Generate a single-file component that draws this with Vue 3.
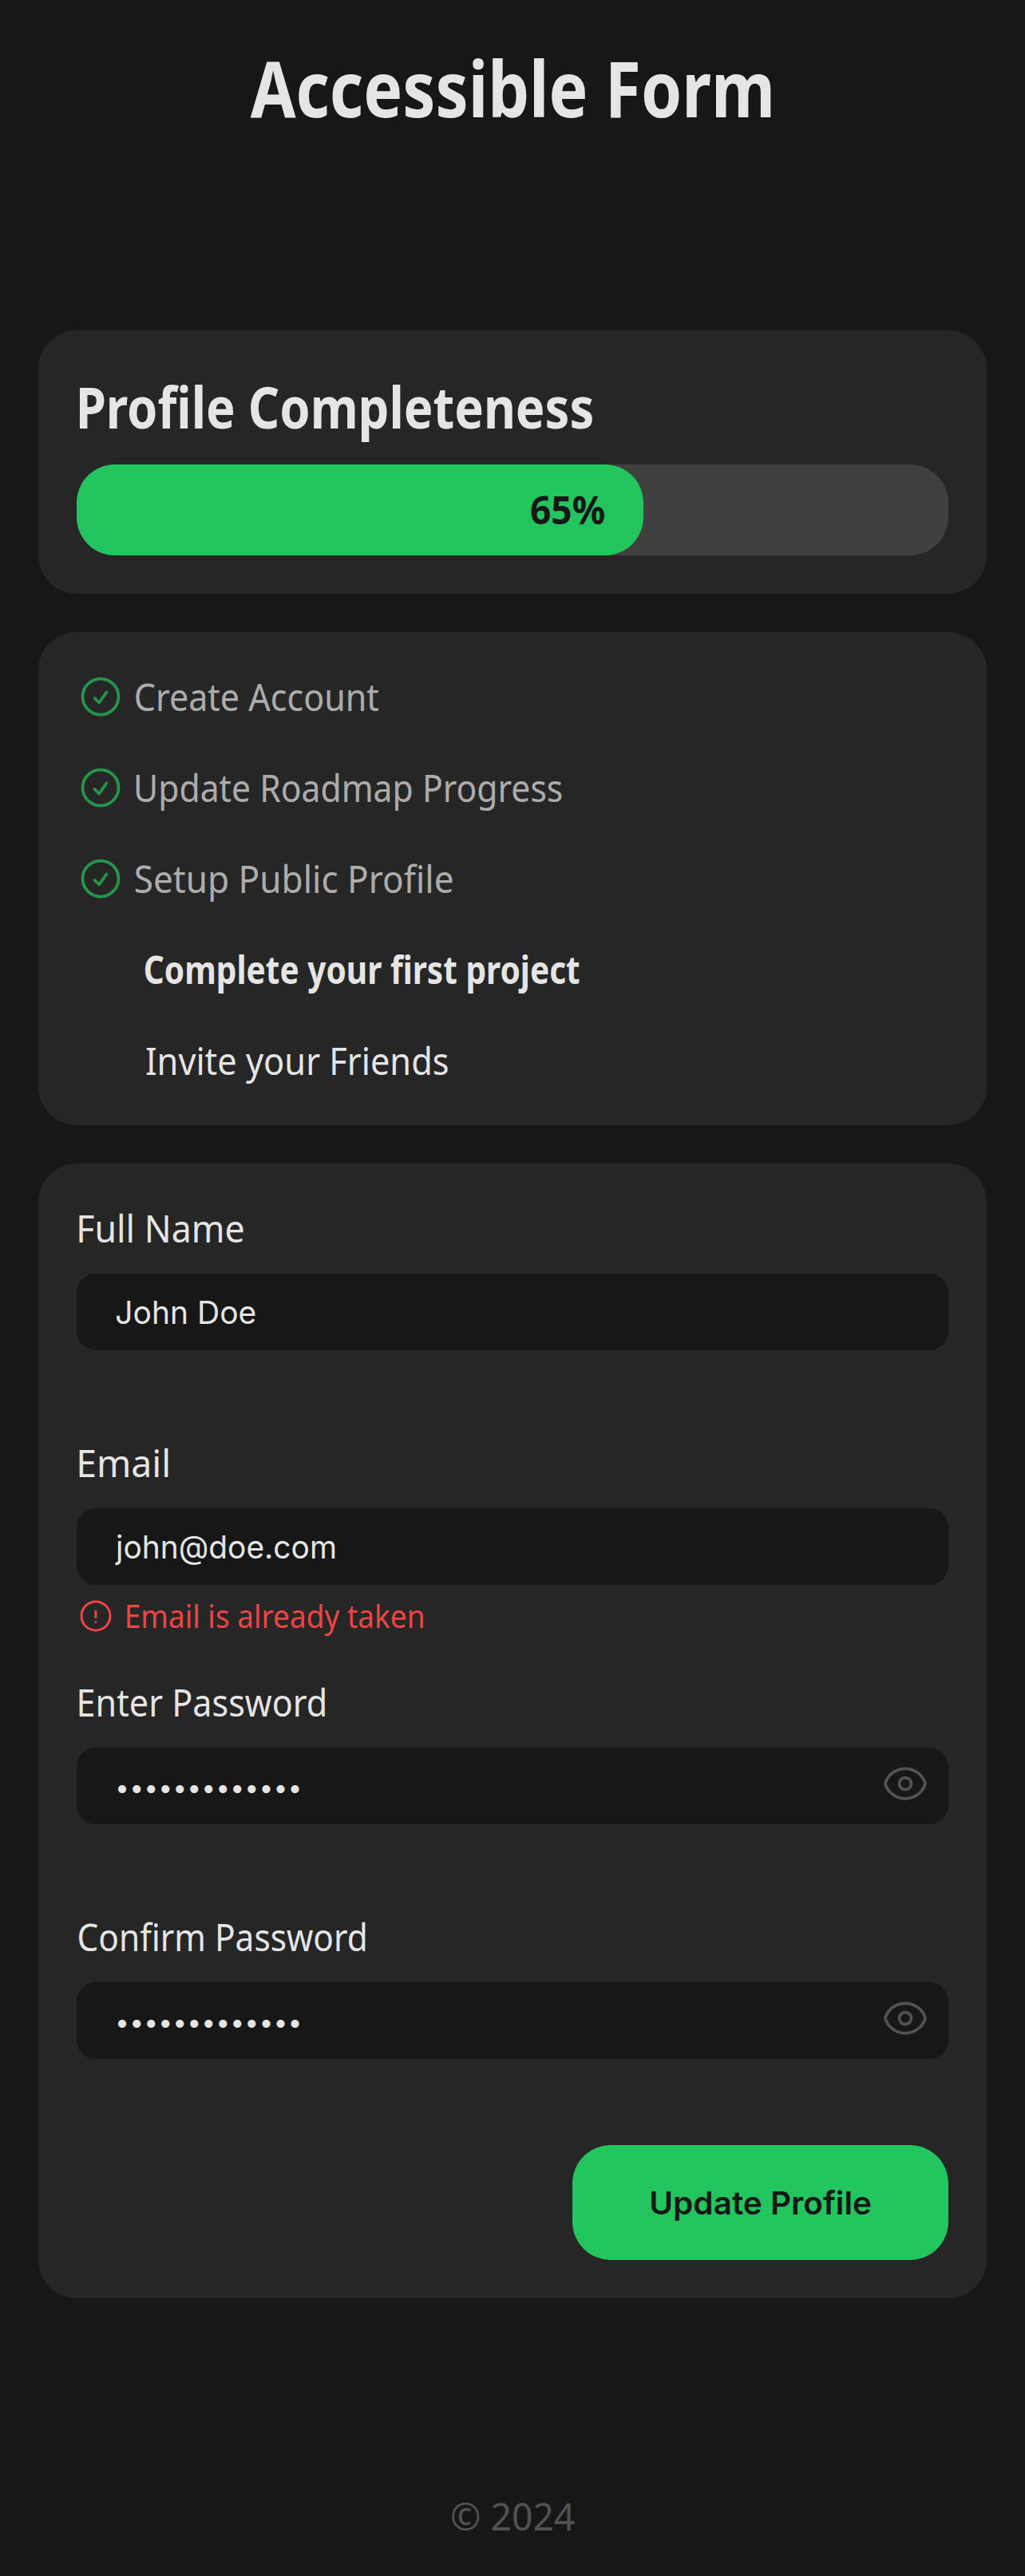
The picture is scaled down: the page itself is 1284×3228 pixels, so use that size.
<script setup>
const steps = [
  { text: 'Create Account', state: 'done', fit: { left: 1.6, width: 305 } },
  { text: 'Update Roadmap Progress', state: 'done', fit: { left: 2.5, width: 533 } },
  { text: 'Setup Public Profile', state: 'done', fit: { left: 1.6, width: 397 } },
  { text: 'Complete your first project', state: 'current', fit: { left: 1.5, width: 544.5 } },
  { text: 'Invite your Friends', state: 'todo', fit: { left: 2.8, width: 378 } },
]

const fields = [
  {
    label: 'Full Name',
    labelFit: { left: 2.9, width: 206 },
    value: 'John Doe',
    valueFit: { left: 1.3, width: 174.7 },
  },
  {
    label: 'Email',
    labelFit: { left: 3, width: 112 },
    value: 'john@doe.com',
    valueFit: { left: 0, width: 275 },
    error: 'Email is already taken',
    errorFit: { left: 2.5, width: 371.5 },
  },
  {
    label: 'Enter Password',
    labelFit: { left: 3.2, width: 308 },
    value: '•••••••••••••',
    secret: true,
  },
  {
    label: 'Confirm Password',
    labelFit: { left: 2.2, width: 359.5 },
    value: '•••••••••••••',
    secret: true,
  },
]

const progress = 65

function measure(el, text) {
  const style = getComputedStyle(el)
  const ctx = document.createElement('canvas').getContext('2d')
  ctx.font = `${style.fontWeight} ${style.fontSize} ${style.fontFamily}`
  return ctx.measureText(text)
}

// Condenses a line of text to a given drawn width, optionally aligning its first glyph's edge.
const vFit = {
  mounted(el, { value }) {
    const m = measure(el, el.textContent.trim())
    const scale = value.width / (m.actualBoundingBoxLeft + m.actualBoundingBoxRight)
    if (value.left === undefined) {
      el.style.transform = `scaleX(${scale})`
      return
    }
    const shift = value.left + m.actualBoundingBoxLeft * scale
    el.style.transformOrigin = 'left center'
    el.style.transform = `translateX(${shift}px) scaleX(${scale})`
  },
}

// Sizes and spaces the password bullets: dot diameter, distance between dots, first dot's edge and centre line.
const vDots = {
  mounted(el, { value }) {
    const base = measure(el, '•')
    const baseSize = parseFloat(getComputedStyle(el).fontSize)
    const size = (baseSize * value.diameter) / (base.actualBoundingBoxLeft + base.actualBoundingBoxRight)
    el.style.fontSize = `${size}px`
    const m = measure(el, '•')
    el.style.letterSpacing = `${value.pitch - m.width}px`
    const baseline = 48.5 + (m.fontBoundingBoxAscent - m.fontBoundingBoxDescent) / 2
    const centre = baseline - (m.actualBoundingBoxAscent - m.actualBoundingBoxDescent) / 2
    el.style.transform = `translate(${value.left + m.actualBoundingBoxLeft}px, ${value.centre - centre}px)`
  },
}
const dots = { diameter: 10.4, pitch: 18.03, left: 4.1, centre: 52 }
</script>

<template>
  <div class="page">
    <header class="header">
      <h1><span v-fit="{ width: 651.6 }" class="fit">Accessible Form</span></h1>
    </header>

    <main class="main">
      <section class="card">
        <h2><span v-fit="{ left: 3.8, width: 642.7 }" class="fit">Profile Completeness</span></h2>
        <div class="track">
          <div class="bar" :style="{ width: progress + '%' }">
            <span v-fit="{ width: 92 }" class="fit percent">{{ progress }}%</span>
          </div>
        </div>
      </section>

      <section class="card">
        <ul class="steps">
          <li v-for="step in steps" :key="step.text" class="step" :class="step.state">
            <svg v-if="step.state === 'done'" class="icon" viewBox="0 0 24 24">
              <path d="M9 12.75 11.25 15 15 9.75M21 12a9 9 0 1 1-18 0 9 9 0 0 1 18 0z" />
            </svg>
            <span v-fit="step.fit" class="fit">{{ step.text }}</span>
          </li>
        </ul>
      </section>

      <form class="card form" @submit.prevent>
        <div v-for="field in fields" :key="field.label" class="field">
          <div class="label"><span v-fit="field.labelFit" class="fit">{{ field.label }}</span></div>
          <div class="input">
            <span v-if="field.secret" v-dots="dots" class="fit">{{ field.value }}</span>
            <span v-else v-fit="field.valueFit" class="fit">{{ field.value }}</span>
            <svg v-if="field.secret" class="icon eye" viewBox="0 0 24 24">
              <path d="M2.036 12.322a1.012 1.012 0 0 1 0-.639C3.423 7.51 7.36 4.5 12 4.5c4.638 0 8.573 3.007 9.963 7.178.07.207.07.431 0 .639C20.577 16.49 16.64 19.5 12 19.5c-4.638 0-8.573-3.007-9.963-7.178z" />
              <path d="M15 12a3 3 0 1 1-6 0 3 3 0 0 1 6 0z" />
            </svg>
          </div>
          <div class="message">
            <div v-if="field.error" class="error">
              <svg class="icon small" viewBox="0 0 24 24">
                <path d="M12 9v3.75m-9-.75a9 9 0 1 1 18 0 9 9 0 0 1-18 0zm9 3.75h.008v.008H12v-.008z" />
              </svg>
              <span v-fit="field.errorFit" class="fit">{{ field.error }}</span>
            </div>
          </div>
        </div>
        <button class="submit" type="submit">
          <span v-fit="{ width: 275 }" class="fit">Update Profile</span>
        </button>
      </form>
    </main>

    <footer class="footer"><span v-fit="{ width: 154 }" class="fit">© 2024</span></footer>
  </div>
</template>

<style>
body {
  margin: 0;
  background: #171717;
}
</style>

<style scoped>
.page {
  box-sizing: border-box;
  min-height: 3228px;
  padding: 48px 48px 0;
  background: #171717;
  color: #e5e5e5;
  font-family: 'Noto Sans', 'Open Sans', sans-serif;
  font-size: 48px;
  line-height: 66px;
}
.fit {
  display: inline-block;
  white-space: nowrap;
}
.header {
  height: 366px;
  text-align: center;
}
h1 {
  margin: 0;
  font-size: 96px;
  line-height: 124px;
}
.main {
  display: flex;
  flex-direction: column;
  gap: 48px;
}
.card {
  padding: 48px;
  border-radius: 48px;
  background: #262626;
}
h2 {
  height: 94px;
  margin: 0 0 26px;
  font-size: 72px;
  line-height: 94px;
}
.track {
  height: 114px;
  border-radius: 48px;
  background: #404040;
}
.bar {
  box-sizing: border-box;
  display: flex;
  justify-content: flex-end;
  height: 114px;
  padding-right: 48px;
  border-radius: 48px;
  background: #22c55e;
  color: #171717;
  font-weight: 700;
  line-height: 113px;
}
.percent {
  transform-origin: right center;
}
.steps {
  display: flex;
  flex-direction: column;
  gap: 48px;
  margin: 0;
  padding: 0;
  list-style: none;
}
.step {
  display: flex;
  align-items: center;
  gap: 12px;
  height: 66px;
  padding-left: 84px;
}
.step .fit,
.label .fit {
  height: 66px;
  line-height: 65px;
}
.step.done {
  padding-left: 0;
  opacity: 0.7;
}
.step.current {
  font-weight: 700;
}
.icon {
  flex: none;
  width: 60px;
  height: 60px;
  fill: none;
  stroke: #22c55e;
  stroke-width: 1.5;
  stroke-linecap: round;
  stroke-linejoin: round;
}
.form {
  display: flex;
  flex-direction: column;
}
.label {
  height: 66px;
  margin-bottom: 24px;
}
.input {
  box-sizing: border-box;
  display: flex;
  justify-content: space-between;
  height: 96px;
  padding: 0 24px 0 48px;
  border-radius: 24px;
  background: #171717;
  font-family: Inter, 'Liberation Sans', sans-serif;
  font-size: 40px;
  line-height: 97px;
}
.icon.eye {
  margin-top: 15px;
  stroke: #525252;
}
.message {
  min-height: 60px;
  margin-bottom: 48px;
}
.error {
  display: flex;
  align-items: center;
  gap: 12px;
  height: 54px;
  padding-top: 12px;
  color: #ef4444;
  font-size: 40px;
  line-height: 54px;
}
.icon.small {
  width: 48px;
  height: 48px;
  stroke: #ef4444;
}
.submit {
  align-self: flex-end;
  width: 471px;
  height: 144px;
  padding: 2px 0 0;
  border: 0;
  border-radius: 48px;
  background: #22c55e;
  color: #171717;
  font: 600 40px/142px Inter, 'Liberation Sans', sans-serif;
}
.footer {
  margin-top: 240px;
  color: #525252;
  text-align: center;
}
</style>
